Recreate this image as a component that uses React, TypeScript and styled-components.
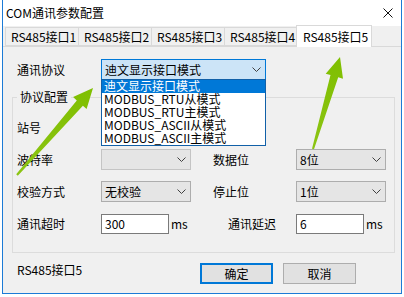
import styled, { createGlobalStyle } from 'styled-components';

const GlobalStyle = createGlobalStyle`
  html, body {
    margin: 0;
    padding: 0;
    background: #ffffff;
  }
  body {
    font-family: "Noto Sans CJK SC", "Noto Sans", sans-serif;
    font-size: 12px;
    color: #000;
  }
`;

const tabs = ['RS485接口1', 'RS485接口2', 'RS485接口3', 'RS485接口4', 'RS485接口5'];
const protocols = ['迪文显示接口模式', 'MODBUS_RTU从模式', 'MODBUS_RTU主模式', 'MODBUS_ASCII从模式', 'MODBUS_ASCII主模式'];

// tail -> tip, in page pixels
const arrows = [
  { tail: [17, 175], tip: [93, 88] },
  { tail: [313, 149], tip: [340, 57] }
];

function arrowPoints(tail: number[], tip: number[]) {
  const [tx, ty] = tail;
  const [px, py] = tip;
  const len = Math.hypot(px - tx, py - ty);
  const ux = (px - tx) / len;
  const uy = (py - ty) / len;
  const nx = -uy;
  const ny = ux;
  const bx = px - ux * 20;
  const by = py - uy * 20;
  const pts = [
    [tx + nx * 1, ty + ny * 1],
    [bx + nx * 4, by + ny * 4],
    [bx + nx * 9, by + ny * 9],
    [px, py],
    [bx - nx * 9, by - ny * 9],
    [bx - nx * 4, by - ny * 4],
    [tx - nx * 1, ty - ny * 1]
  ];
  return pts.map((p) => p.map((v) => v.toFixed(1)).join(',')).join(' ');
}

function Chevron() {
  return (
    <svg width="9" height="5" viewBox="0 0 9 5">
      <polyline points="0.5,0.5 4.5,4.5 8.5,0.5" fill="none" stroke="#404040" strokeWidth="1" />
    </svg>
  );
}

function App() {
  return (
    <Page>
      <GlobalStyle />
      <Window>
        <TitleBar>
          <span>COM通讯参数配置</span>
          <svg width="10" height="10" viewBox="0 0 10 10">
            <path d="M0.5 0.5 L9.5 9.5 M9.5 0.5 L0.5 9.5" stroke="#111" strokeWidth="1" />
          </svg>
        </TitleBar>
        <TabStrip>
          {tabs.map((t, i) => (
            <Tab key={t} active={i === 4}>
              {t}
            </Tab>
          ))}
        </TabStrip>
        <Panel>
          <ProtocolRow>
            <Label>通讯协议</Label>
            <OpenCombo>
              <span>迪文显示接口模式</span>
              <Chevron />
              <DropList>
                {protocols.map((p, i) => (
                  <DropItem key={p} selected={i === 0}>
                    {p}
                  </DropItem>
                ))}
              </DropList>
            </OpenCombo>
          </ProtocolRow>
          <Group>
            <Legend>协议配置</Legend>
            <FieldGrid>
              <Label>站号</Label>
              <span />
              <span />
              <span />
              <span />

              <Label>波特率</Label>
              <Select disabled>
                <span />
                <Chevron />
              </Select>
              <span />
              <Label>数据位</Label>
              <Select>
                <span>8位</span>
                <Chevron />
              </Select>

              <Label>校验方式</Label>
              <Select>
                <span>无校验</span>
                <Chevron />
              </Select>
              <span />
              <Label>停止位</Label>
              <Select>
                <span>1位</span>
                <Chevron />
              </Select>

              <Label>通讯超时</Label>
              <Cell>
                <TextBox>300</TextBox>
                <Unit>ms</Unit>
              </Cell>
              <span />
              <Label indent={15}>通讯延迟</Label>
              <Cell>
                <TextBox>6</TextBox>
                <Unit>ms</Unit>
              </Cell>
            </FieldGrid>
          </Group>
          <Footer>
            <FooterNote>RS485接口5</FooterNote>
            <Buttons>
              <Button primary>确定</Button>
              <Button>取消</Button>
            </Buttons>
          </Footer>
        </Panel>
      </Window>
      <Overlay width="404" height="297" viewBox="0 0 404 297">
        <defs>
          <linearGradient id="arrowFill" x1="0" y1="1" x2="0" y2="0">
            <stop offset="0" stopColor="#8cc414" />
            <stop offset="1" stopColor="#7fbf00" />
          </linearGradient>
        </defs>
        {arrows.map((a, i) => (
          <polygon key={i} points={arrowPoints(a.tail, a.tip)} fill="url(#arrowFill)" />
        ))}
      </Overlay>
    </Page>
  );
}

const Page = styled.div`
  position: relative;
  width: 404px;
  height: 297px;
  overflow: hidden;
`;

const Overlay = styled.svg`
  position: absolute;
  left: 0;
  top: 0;
  pointer-events: none;
`;

const Window = styled.div`
  margin-left: 2px;
  width: 400px;
  height: 294px;
  box-sizing: border-box;
  border: 1px solid #1c7bd6;
  border-top: none;
  background: #f0f0f0;
  display: flex;
  flex-direction: column;
`;

const TitleBar = styled.div`
  height: 26px;
  background: #ffffff;
  display: flex;
  align-items: center;
  justify-content: space-between;
  padding: 0 8px 0 3px;
  font-size: 12px;
  line-height: 16px;
`;

const TabStrip = styled.div`
  margin-top: 1px;
  height: 19px;
  padding-left: 2px;
  display: flex;
  align-items: flex-start;
  border-bottom: 1px solid #d9d9d9;
`;

const Tab = styled.div<{ active?: boolean }>`
  position: relative;
  box-sizing: border-box;
  width: ${({ active }) => (active ? '76px' : '74px')};
  height: ${({ active }) => (active ? '22px' : '19px')};
  margin-top: ${({ active }) => (active ? '-2px' : '0')};
  margin-left: ${({ active }) => (active ? '-2px' : '-1px')};
  padding-left: ${({ active }) => (active ? '6px' : '5px')};
  border: 1px solid #d9d9d9;
  border-bottom: ${({ active }) => (active ? 'none' : '1px solid #d9d9d9')};
  background: ${({ active }) => (active ? '#ffffff' : '#f0f0f0')};
  z-index: ${({ active }) => (active ? 1 : 0)};
  display: flex;
  align-items: center;
  white-space: nowrap;
  line-height: 16px;
  color: #000;

  &:first-child {
    margin-left: 0;
  }
`;

const Panel = styled.div`
  padding: 12px 5px 0 9px;
`;

const ProtocolRow = styled.div`
  display: flex;
  align-items: center;
  height: 21px;
  padding-left: 5px;
`;

const Label = styled.div<{ indent?: number }>`
  width: 84px;
  padding-left: ${({ indent }) => indent || 0}px;
  box-sizing: border-box;
  line-height: 16px;
  align-self: center;
  white-space: nowrap;
`;

const OpenCombo = styled.div`
  position: relative;
  box-sizing: border-box;
  width: 165px;
  height: 21px;
  border: 1px solid #0078d7;
  background: #cce4f7;
  display: flex;
  align-items: center;
  justify-content: space-between;
  padding: 0 4px 0 3px;
  line-height: 16px;
`;

const DropList = styled.div`
  position: absolute;
  left: -1px;
  top: 19px;
  width: 165px;
  box-sizing: border-box;
  border: 1px solid #1160a8;
  background: #ffffff;
  z-index: 5;
  overflow: hidden;
`;

const DropItem = styled.div<{ selected?: boolean }>`
  height: 13px;
  line-height: 12px;
  padding-left: 2px;
  white-space: nowrap;
  background: ${({ selected }) => (selected ? '#0078d7' : '#ffffff')};
  color: ${({ selected }) => (selected ? '#ffffff' : '#000000')};
`;

const Group = styled.fieldset`
  margin: 9px 0 0 0;
  padding: 12px 0 18px 4px;
  width: 383px;
  box-sizing: border-box;
  border: 1px solid #dcdcdc;
  min-inline-size: 0;
`;

const Legend = styled.legend`
  padding: 0 3px;
  line-height: 16px;
  font-size: 12px;
`;

const FieldGrid = styled.div`
  display: grid;
  grid-template-columns: 84px 90px 22px 83px 90px;
  grid-auto-rows: 21px;
  row-gap: 11px;
`;

const Select = styled.div<{ disabled?: boolean }>`
  box-sizing: border-box;
  width: 90px;
  height: 21px;
  border: 1px solid ${({ disabled }) => (disabled ? '#c4c4c4' : '#adadad')};
  background: #e5e5e5;
  display: flex;
  align-items: center;
  justify-content: space-between;
  padding: 0 4px 0 3px;
  line-height: 16px;
`;

const Cell = styled.div`
  display: flex;
  align-items: center;
`;

const TextBox = styled.div`
  box-sizing: border-box;
  width: 68px;
  height: 20px;
  border: 1px solid #7a7a7a;
  background: #ffffff;
  padding-left: 3px;
  line-height: 18px;
  flex-shrink: 0;
`;

const Unit = styled.span`
  margin-left: 2px;
  line-height: 16px;
`;

const Footer = styled.div`
  margin-top: 10px;
  display: flex;
  align-items: flex-start;
  padding-left: 5px;
`;

const FooterNote = styled.div`
  line-height: 12px;
  padding-top: 1px;
`;

const Buttons = styled.div`
  margin-left: auto;
  margin-right: 40px;
  display: flex;
  gap: 10px;
`;

const Button = styled.button<{ primary?: boolean }>`
  box-sizing: border-box;
  width: 73px;
  height: 21px;
  padding: 0;
  font-family: "Noto Sans CJK SC", "Noto Sans", sans-serif;
  font-size: 12px;
  line-height: 16px;
  color: #000;
  background: #e1e1e1;
  border: ${({ primary }) => (primary ? '2px solid #0078d7' : '1px solid #adadad')};
`;

export default App;
